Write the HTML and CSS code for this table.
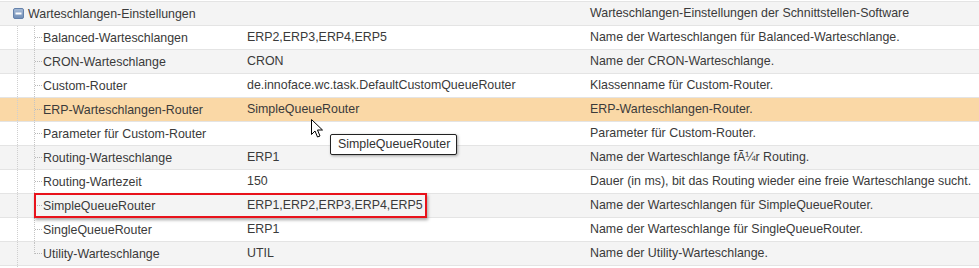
FILE: index.html
```html
<!DOCTYPE html>
<html>
<head>
<meta charset="utf-8">
<link rel="stylesheet" href="styles.css">
</head>
<body>
<div class="tree">
  <div class="row alt">
    <div class="name head">
      <span class="l1"></span>
      <svg class="exp" width="11" height="11" viewBox="0 0 11 11"><defs><linearGradient id="g" x1="0" y1="0" x2="0" y2="1"><stop offset="0" stop-color="#a9bdd8"/><stop offset="1" stop-color="#6f8cb4"/></linearGradient></defs><rect x="0.5" y="0.5" width="10" height="10" rx="1.5" fill="url(#g)" stroke="#6582ab"/><rect x="2.5" y="4.5" width="6" height="2" fill="#fff"/></svg>
      <span class="txt">Warteschlangen-Einstellungen</span>
    </div>
    <div class="val"></div>
    <div class="desc">Warteschlangen-Einstellungen der Schnittstellen-Software</div>
  </div>
  <div class="row">
    <div class="name"><span class="l1"></span><span class="l2"></span><span class="h"></span><span class="txt">Balanced-Warteschlangen</span></div>
    <div class="val">ERP2,ERP3,ERP4,ERP5</div>
    <div class="desc">Name der Warteschlangen für Balanced-Warteschlange.</div>
  </div>
  <div class="row alt">
    <div class="name"><span class="l1"></span><span class="l2"></span><span class="h"></span><span class="txt">CRON-Warteschlange</span></div>
    <div class="val">CRON</div>
    <div class="desc">Name der CRON-Warteschlange.</div>
  </div>
  <div class="row">
    <div class="name"><span class="l1"></span><span class="l2"></span><span class="h"></span><span class="txt">Custom-Router</span></div>
    <div class="val">de.innoface.wc.task.DefaultCustomQueueRouter</div>
    <div class="desc">Klassenname für Custom-Router.</div>
  </div>
  <div class="row sel">
    <div class="name"><span class="l1"></span><span class="l2"></span><span class="h"></span><span class="txt">ERP-Warteschlangen-Router</span></div>
    <div class="val">SimpleQueueRouter</div>
    <div class="desc">ERP-Warteschlangen-Router.</div>
  </div>
  <div class="row">
    <div class="name"><span class="l1"></span><span class="l2"></span><span class="h"></span><span class="txt">Parameter für Custom-Router</span></div>
    <div class="val"></div>
    <div class="desc">Parameter für Custom-Router.</div>
  </div>
  <div class="row alt">
    <div class="name"><span class="l1"></span><span class="l2"></span><span class="h"></span><span class="txt">Routing-Warteschlange</span></div>
    <div class="val">ERP1</div>
    <div class="desc">Name der Warteschlange fÃ¼r Routing.</div>
  </div>
  <div class="row">
    <div class="name"><span class="l1"></span><span class="l2"></span><span class="h"></span><span class="txt">Routing-Wartezeit</span></div>
    <div class="val">150</div>
    <div class="desc">Dauer (in ms), bit das Routing wieder eine freie Warteschlange sucht.</div>
  </div>
  <div class="row alt">
    <div class="name"><span class="l1"></span><span class="l2"></span><span class="h"></span><span class="txt">SimpleQueueRouter</span></div>
    <div class="val">ERP1,ERP2,ERP3,ERP4,ERP5</div>
    <div class="desc">Name der Warteschlangen für SimpleQueueRouter.</div>
  </div>
  <div class="row">
    <div class="name"><span class="l1"></span><span class="l2"></span><span class="h"></span><span class="txt">SingleQueueRouter</span></div>
    <div class="val">ERP1</div>
    <div class="desc">Name der Warteschlange für SingleQueueRouter.</div>
  </div>
  <div class="row alt">
    <div class="name"><span class="l1"></span><span class="l2 last"></span><span class="h"></span><span class="txt">Utility-Warteschlange</span></div>
    <div class="val">UTIL</div>
    <div class="desc">Name der Utility-Warteschlange.</div>
  </div>
  <div class="tail"><span class="l1"></span></div>

  <div class="mark"></div>
  <svg class="cursor" width="13" height="20" viewBox="0 0 13 20"><path d="M0.5 0.5 L0.5 15.5 L4 12 L6.5 18 L9 17 L6.5 11 L11.5 11 Z" fill="#fff" stroke="#000" stroke-width="1" stroke-linejoin="miter"/></svg>
  <div class="tip">SimpleQueueRouter</div>
</div>
</body>
</html>
```
FILE: styles.css
```css
html, body {
  margin: 0;
  padding: 0;
  background: #fff;
}
.tree {
  position: relative;
  width: 979px;
  height: 268px;
  padding-top: 1px;
  box-sizing: border-box;
  font-family: "Liberation Sans", Arial, sans-serif;
  font-size: 12.4px;
  color: #3a3a3a;
  overflow: hidden;
}
.row {
  display: grid;
  grid-template-columns: 240px 343px 1fr;
  height: 23px;
  border-top: 1px solid #e4e4e4;
  background: #fff;
}
.row.alt { background: #f4f4f4; }
.row.sel { background: #fad8a6; }
.name {
  display: flex;
  align-items: center;
  height: 23px;
}
.val, .desc {
  padding-left: 7px;
  line-height: 23px;
  white-space: nowrap;
}
.l1 {
  width: 18px;
  height: 23px;
  flex: none;
  box-sizing: border-box;
  border-right: 1px dotted #cfcfcf;
}
.head .l1 {
  width: 13px;
  border-right: none;
}
.l2 {
  width: 17px;
  height: 23px;
  flex: none;
  box-sizing: border-box;
  border-right: 1px dotted #c4c4c4;
}
.l2.last {
  align-self: flex-start;
  height: 12px;
}
.h {
  width: 7px;
  flex: none;
  border-top: 1px dotted #b8b8b8;
  height: 0;
}
.txt {
  margin-left: 1px;
  white-space: nowrap;
}
.exp {
  flex: none;
  margin-right: 3px;
}
.tail {
  height: 3px;
  display: flex;
  border-top: 1px solid #e4e4e4;
}
.tail .l1 { height: 3px; }
.mark {
  position: absolute;
  left: 34px;
  top: 193px;
  width: 393px;
  height: 25px;
  box-sizing: border-box;
  border: 2px solid #e8121b;
  box-shadow: 1px 2px 3px rgba(0,0,0,0.35);
}
.cursor {
  position: absolute;
  left: 311px;
  top: 119px;
}
.tip {
  position: absolute;
  left: 330px;
  top: 134px;
  width: 127px;
  height: 21px;
  box-sizing: border-box;
  border: 1px solid #222;
  border-radius: 2px;
  background: #fff;
  box-shadow: 1px 1px 3px rgba(0,0,0,0.35);
  padding-left: 7px;
  line-height: 19px;
  color: #333;
  white-space: nowrap;
}
```
